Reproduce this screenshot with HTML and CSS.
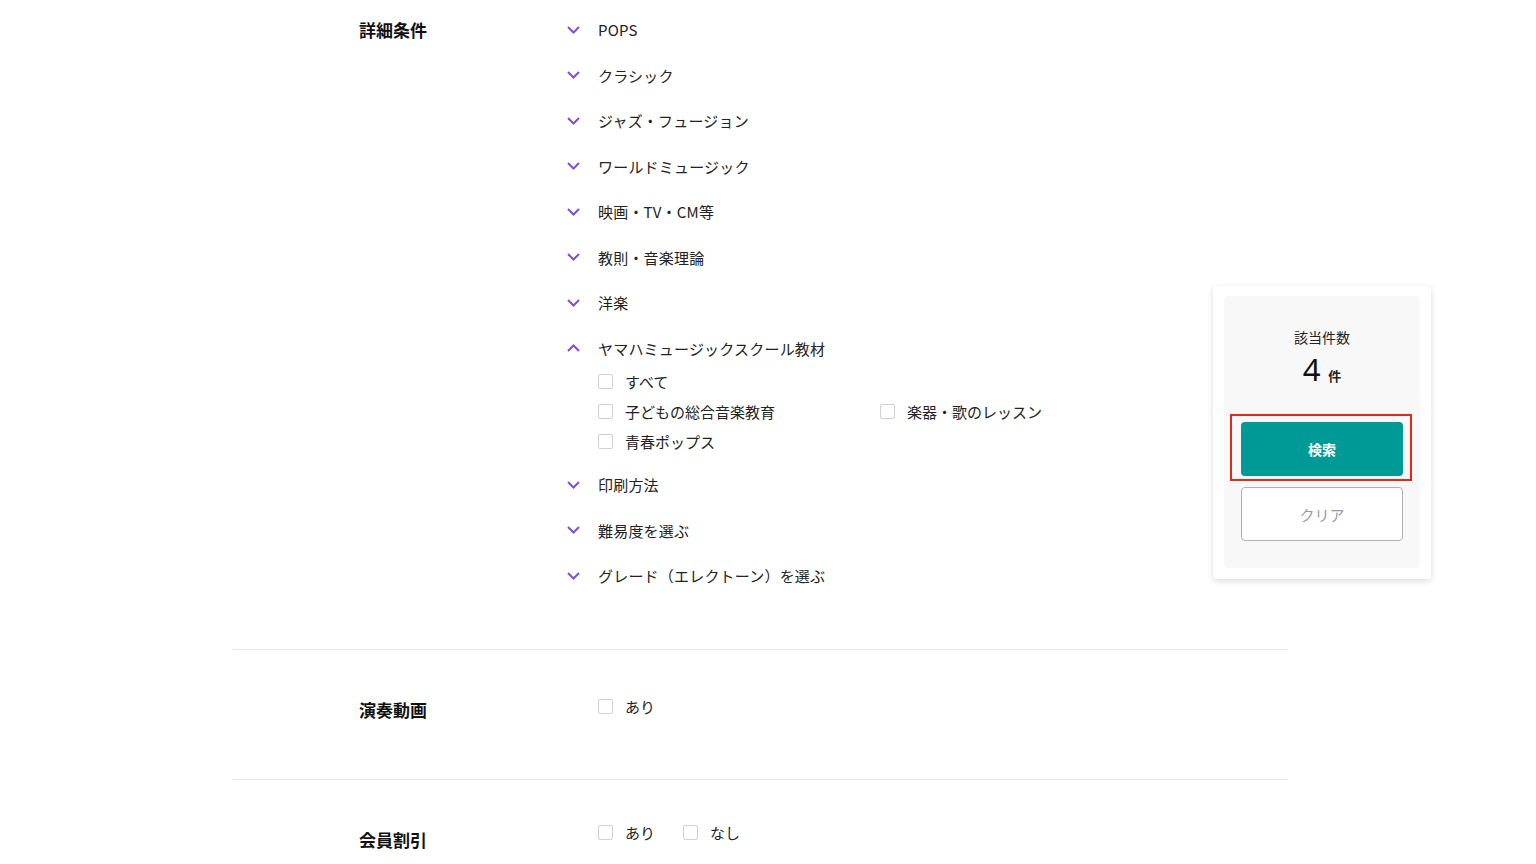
FILE: index.html
```html
<!DOCTYPE html>
<html lang="ja">
<head>
    <meta charset="UTF-8">
    <meta name="viewport" content="width=device-width, initial-scale=1.0">
    <title>詳細検索</title>
    <link rel="stylesheet" href="styles.css">
</head>
<body>
    <div class="search-form">
        <div class="section section-detail">
            <div class="section-label">詳細条件</div>
            <div class="section-body">
                <div class="acc"><svg class="chev" viewBox="0 0 13 8"><polyline points="1,1 6.5,6.5 12,1"/></svg>POPS</div>
                <div class="acc"><svg class="chev" viewBox="0 0 13 8"><polyline points="1,1 6.5,6.5 12,1"/></svg>クラシック</div>
                <div class="acc"><svg class="chev" viewBox="0 0 13 8"><polyline points="1,1 6.5,6.5 12,1"/></svg>ジャズ・フュージョン</div>
                <div class="acc"><svg class="chev" viewBox="0 0 13 8"><polyline points="1,1 6.5,6.5 12,1"/></svg>ワールドミュージック</div>
                <div class="acc"><svg class="chev" viewBox="0 0 13 8"><polyline points="1,1 6.5,6.5 12,1"/></svg>映画・TV・CM等</div>
                <div class="acc"><svg class="chev" viewBox="0 0 13 8"><polyline points="1,1 6.5,6.5 12,1"/></svg>教則・音楽理論</div>
                <div class="acc"><svg class="chev" viewBox="0 0 13 8"><polyline points="1,1 6.5,6.5 12,1"/></svg>洋楽</div>
                <div class="acc open"><svg class="chev" viewBox="0 0 13 8"><polyline points="1,7 6.5,1.5 12,7"/></svg>ヤマハミュージックスクール教材</div>
                <div class="sub-list">
                    <label class="check"><span class="box"></span>すべて</label>
                    <div class="sub-grid">
                        <label class="check"><span class="box"></span>子どもの総合音楽教育</label>
                        <label class="check"><span class="box"></span>楽器・歌のレッスン</label>
                        <label class="check"><span class="box"></span>青春ポップス</label>
                    </div>
                </div>
                <div class="acc"><svg class="chev" viewBox="0 0 13 8"><polyline points="1,1 6.5,6.5 12,1"/></svg>印刷方法</div>
                <div class="acc"><svg class="chev" viewBox="0 0 13 8"><polyline points="1,1 6.5,6.5 12,1"/></svg>難易度を選ぶ</div>
                <div class="acc"><svg class="chev" viewBox="0 0 13 8"><polyline points="1,1 6.5,6.5 12,1"/></svg>グレード（エレクトーン）を選ぶ</div>
            </div>
        </div>

        <div class="section section-small">
            <div class="section-label">演奏動画</div>
            <div class="section-body inline">
                <label class="check"><span class="box"></span>あり</label>
            </div>
        </div>

        <div class="section section-small section-member">
            <div class="section-label">会員割引</div>
            <div class="section-body inline">
                <label class="check"><span class="box"></span>あり</label>
                <label class="check"><span class="box"></span>なし</label>
            </div>
        </div>
    </div>

    <div class="result-panel">
        <div class="result-inner">
            <div class="result-title">該当件数</div>
            <div class="result-count"><span class="num">4</span><span class="unit">件</span></div>
            <div class="highlight">
                <button class="btn-search">検索</button>
            </div>
            <button class="btn-clear">クリア</button>
        </div>
    </div>
</body>
</html>
```

FILE: styles.css
```css
body {
    margin: 0;
    font-family: "Noto Sans CJK JP", "Noto Sans", sans-serif;
    color: #222;
    background: #fff;
}
.search-form {
    width: 1055px;
    margin-left: 233px;
}
.section {
    display: flex;
    padding-left: 126px;
    border-bottom: 1px solid #e6e6e6;
}
.section-detail {
    padding-top: 7px;
    padding-bottom: 50px;
}
.section-label {
    width: 208px;
    flex-shrink: 0;
    font-size: 17px;
    font-weight: bold;
    line-height: 45.5px;
    color: #111;
}
.section-body {
    flex: 1;
}
.acc {
    display: flex;
    align-items: center;
    height: 45.5px;
    font-size: 15px;
    letter-spacing: 0.2px;
}
.chev {
    width: 13px;
    height: 8px;
    margin-right: 18px;
    fill: none;
    stroke: #7a52d8;
    stroke-width: 2;
}
.sub-list {
    margin: -5px 0 6px 31px;
}
.sub-grid {
    display: grid;
    grid-template-columns: 282px 282px;
}
.check {
    display: flex;
    align-items: center;
    height: 30px;
    font-size: 15px;
}
.box {
    width: 15px;
    height: 15px;
    border: 1px solid #d0d0d0;
    border-radius: 2px;
    box-sizing: border-box;
    margin-right: 12px;
    background: #fff;
}
.section-small {
    height: 130px;
    box-sizing: border-box;
}
.section-small .section-label {
    padding-top: 47px;
    line-height: 26px;
}
.section-body.inline {
    display: flex;
    gap: 28px;
    padding: 42px 0 0 31px;
    align-self: flex-start;
}
.section-member {
    border-bottom: none;
}
.section-member .section-label {
    padding-top: 47px;
}
.section-member .section-body.inline {
    padding-top: 38px;
}
.result-panel {
    position: fixed;
    left: 1213px;
    top: 286px;
    width: 218px;
    height: 293px;
    padding: 10px 11px 11px 11px;
    box-sizing: border-box;
    background: #fff;
    border-radius: 4px;
    box-shadow: 0 2px 6px rgba(0,0,0,0.15);
}
.result-inner {
    background: #f8f8f8;
    border-radius: 4px;
    height: 100%;
    padding: 31px 17px 0 17px;
    box-sizing: border-box;
}
.result-title {
    text-align: center;
    font-size: 14px;
    line-height: 20px;
}
.result-count {
    text-align: center;
    line-height: 36px;
    margin-top: 4px;
}
.result-count .num {
    font-size: 31px;
    color: #111;
    font-family: "Noto Sans", sans-serif;
}
.result-count .unit {
    font-size: 13px;
    font-weight: bold;
    margin-left: 8px;
}
.highlight {
    margin: 20px -9px 0 -11px;
    padding: 6px 7px 3px 9px;
    border: 2px solid #e02b1c;
}
.btn-search,
.btn-clear {
    display: block;
    width: 162px;
    height: 54px;
    border-radius: 4px;
    font-family: inherit;
    cursor: pointer;
}
.btn-search {
    background: #009a96;
    color: #fff;
    border: none;
    font-size: 14px;
    font-weight: bold;
}
.btn-clear {
    margin-top: 6px;
    background: #fff;
    border: 1px solid #b0b0b0;
    color: #9a9a9a;
    font-size: 15px;
}
```
